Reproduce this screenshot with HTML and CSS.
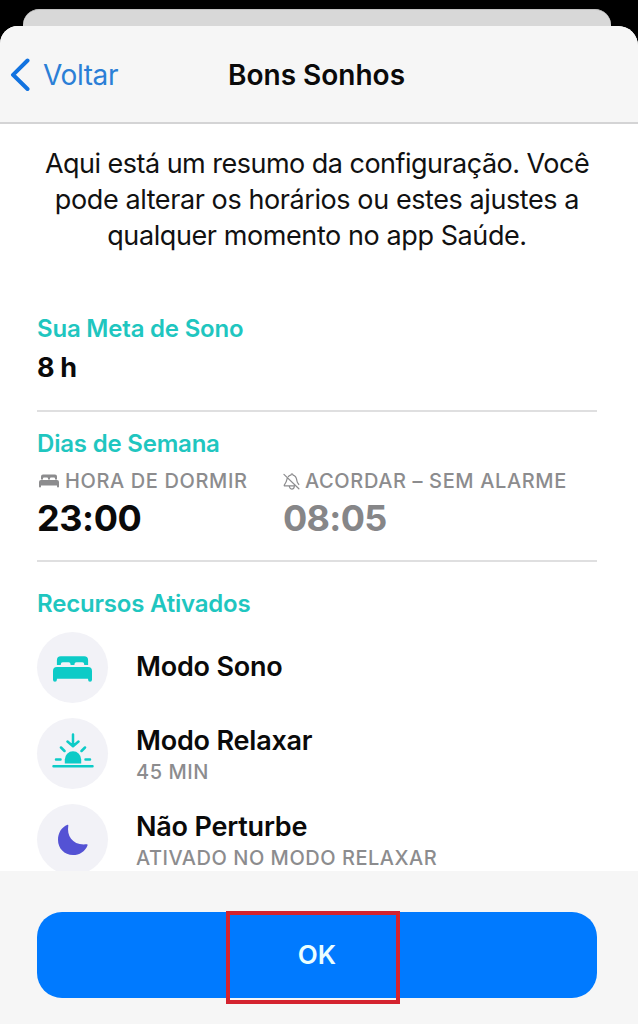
FILE: index.html
```html
<!DOCTYPE html>
<html lang="pt-BR">
<head>
<meta charset="utf-8">
<title>Bons Sonhos</title>
<link rel="stylesheet" href="styles.css">
</head>
<body>
<div class="screen">
  <div class="back-sheet"></div>
  <div class="sheet">
    <header class="nav">
      <a class="back">
        <svg class="chevron" viewBox="0 0 20 34"><path d="M17.500 2.500 3 16.800 17.500 31"/></svg>
        <span class="back-label">Voltar</span>
      </a>
      <h1 class="title">Bons Sonhos</h1>
    </header>
    <main class="content">
      <p class="intro"><span class="wide-line">Aqui está um resumo da configuração. Você</span><br>pode alterar os horários ou estes ajustes a<br>qualquer momento no app Saúde.</p>
      <section class="goal">
        <h2 class="heading">Sua Meta de Sono</h2>
        <div class="goal-value">8 h</div>
      </section>
      <section class="schedule">
        <h2 class="heading">Dias de Semana</h2>
        <div class="times">
          <div class="time-col">
            <div class="label">
              <svg class="bed-small" viewBox="0 0 40 28"><path d="M4 11V5q0-4 4-4h24q4 0 4 4v6h-4V9q0-2-2-2h-6q-2 0-2 2v2h-4V9q0-2-2-2h-6q-2 0-2 2v2zM4 12h32q4 0 4 4v9q0 2-2 2t-2-2v-2H4v2q0 2-2 2t-2-2v-9q0-4 4-4z"/></svg>
              <span>HORA DE DORMIR</span>
            </div>
            <div class="time">23:00</div>
          </div>
          <div class="time-col">
            <div class="label">
              <svg class="bell" viewBox="0 0 18 18"><path d="M4.500 5.500C3.800 8.500 3.600 10 1.500 12.500q-.6 1.200.6 1.200H12M5.700 3.700Q7 2.300 8.300 2.200 8.600 1 9.500 1t1.200 1.200c3.500.8 3.600 3.600 4 6 .3 1.800 1.200 2.800 2 4M6.700 14.500q.6 2.500 2.700 2.500t2.600-2.500M1 1.500l15.800 15.200"/></svg>
              <span>ACORDAR – SEM ALARME</span>
            </div>
            <div class="time muted">08:05</div>
          </div>
        </div>
      </section>
      <section class="features">
        <h2 class="heading">Recursos Ativados</h2>
        <div class="feature feature-single">
          <div class="disc"><svg class="bed" viewBox="0 0 40 28"><path d="M4 10V5q0-4 4-4h24q4 0 4 4v5h-4V9q0-2-2-2h-6q-2 0-2 2v1h-4V9q0-2-2-2h-6q-2 0-2 2v1zM4 12h32q4 0 4 4v9q0 2-2 2t-2-2v-1H4v1q0 2-2 2t-2-2v-9q0-4 4-4z"/></svg></div>
          <div class="name">Modo Sono</div>
        </div>
        <div class="feature">
          <div class="disc"><svg class="sunset" viewBox="0 0 42 36"><path class="sun" d="M12.800 30.500v-4a8.200 8.200 0 0 1 16.400 0v4z"/><path d="M1.500 33.300h39M21 1.500v11M15.500 8.500l5.500 4.700 5.500-4.700M9 14.500l3.500 3.500M33 14.500l-3.500 3.500M4 26.500h4.500M33.500 26.500H38"/></svg></div>
          <div class="texts">
            <div class="name">Modo Relaxar</div>
            <div class="detail">45 MIN</div>
          </div>
        </div>
        <div class="feature">
          <div class="disc"><svg class="moon" viewBox="0 0 32 32"><path d="M10.500.8Q11.500.5 11.300 1.700C9.500 12 16 21.800 29.500 20.300q1.500-.2 1 1.100C28 27.500 22.500 31 16 31 7.300 31 1 24.500 1 15.800 1 9 4.500 3.200 10.500.8z"/></svg></div>
          <div class="texts">
            <div class="name">Não Perturbe</div>
            <div class="detail">ATIVADO NO MODO RELAXAR</div>
          </div>
        </div>
      </section>
    </main>
    <footer class="footer">
      <button class="ok">OK</button>
      <div class="highlight"></div>
    </footer>
  </div>
</div>
</body>
</html>
```
FILE: styles.css
```css
* { box-sizing: border-box; }
body { margin: 0; background: #000; font-family: Inter, "Liberation Sans", sans-serif; color: #0a0a0a; }
.screen { width: 638px; height: 1024px; overflow: hidden; display: flex; flex-direction: column; padding-top: 9px; }
.back-sheet { height: 17px; flex: none; margin: 0 27px 0 23px; background: #d8d8d8; border-top: 1px solid #c2c2c2; border-radius: 16px 16px 0 0; }
.sheet { flex: 1; min-height: 0; display: flex; flex-direction: column; background: #fff; border-radius: 18px 20px 0 0; overflow: hidden; }
.nav { height: 98px; flex: none; background: #f6f6f6; border-bottom: 2px solid #d4d4d5; display: grid; grid-template-columns: 228px 1fr; align-items: center; padding-top: 2px; }
.back { display: flex; align-items: center; gap: 13px; padding-left: 10px; color: #2b7fd6; }
.chevron { width: 20px; height: 34px; fill: none; stroke: #1273e0; stroke-width: 4; stroke-linecap: round; stroke-linejoin: round; }
.back-label { font-size: 28px; line-height: 34px; letter-spacing: -0.4px; }
.title { margin: 0; font-size: 28px; line-height: 34px; font-weight: 600; white-space: nowrap; }
.content { height: 747px; flex: none; overflow: hidden; padding: 22px 41px 0 37px; }
.intro { margin: 0 -30px; text-align: center; font-size: 27px; line-height: 36px; color: #111; white-space: nowrap; letter-spacing: -0.41px; }
.wide-line { letter-spacing: -0.52px; }
.goal { margin-top: 59px; height: 99px; border-bottom: 2px solid #dfdfe0; }
.heading { margin: 0; font-size: 24px; line-height: 32px; font-weight: 600; color: #1fc6c0; white-space: nowrap; letter-spacing: -0.2px; }
.goal-value { margin-top: 6px; font-size: 27px; line-height: 34px; font-weight: 700; letter-spacing: -0.3px; }
.schedule { height: 150px; padding-top: 16px; border-bottom: 2px solid #dfdfe0; }
.times { display: grid; grid-template-columns: 246px 1fr; }
.label { display: flex; align-items: center; margin-top: 8px; height: 26px; font-size: 20px; font-weight: 500; letter-spacing: 0.62px; color: #8c8c8e; white-space: nowrap; }
.bed-small { width: 20px; height: 14px; margin: 0 6px 0 2px; fill: #8c8c8e; }
.bell { width: 17px; height: 17px; margin-right: 5px; fill: none; stroke: #8c8c8e; stroke-width: 1.3; stroke-linecap: round; }
.time { margin-top: 2px; font-size: 36px; line-height: 44px; font-weight: 700; letter-spacing: -0.4px; }
.time.muted { color: #868688; letter-spacing: -0.7px; }
.features { padding-top: 26px; }
.features .heading { margin-bottom: 12px; }
.feature { display: flex; align-items: center; gap: 28px; height: 71px; margin-bottom: 15px; }
.feature-single .name { padding-bottom: 1px; }
.disc { width: 71px; height: 71px; border-radius: 50%; background: #f2f2f7; display: flex; align-items: center; justify-content: center; }
.texts { padding-top: 1px; }
.name { font-size: 27px; line-height: 34px; font-weight: 600; white-space: nowrap; letter-spacing: -0.2px; }
.detail { font-size: 20px; line-height: 26px; font-weight: 500; letter-spacing: 0.53px; color: #8c8c8e; white-space: nowrap; margin-top: 1px; }
.bed { width: 39px; height: 28px; margin-top: 2px; fill: #0dcbc7; }
.sunset { width: 42px; height: 36px; margin-bottom: 6px; fill: none; stroke: #0dcbc7; stroke-width: 2.5; stroke-linecap: round; stroke-linejoin: round; }
.sunset .sun { fill: #0dcbc7; stroke: none; }
.moon { width: 32px; height: 32px; fill: #5452d4; }
.footer { position: relative; flex: 1; background: #f6f6f6; padding: 41px 41px 0 37px; }
.ok { display: block; width: 100%; height: 86px; padding: 0; border: 0; border-radius: 25px; background: #007aff; color: #eaffff; font: 600 26px/34px Inter, sans-serif; }
.highlight { position: absolute; left: 226px; top: 40px; width: 174px; height: 93px; border: 4px solid #d4232f; }
```
